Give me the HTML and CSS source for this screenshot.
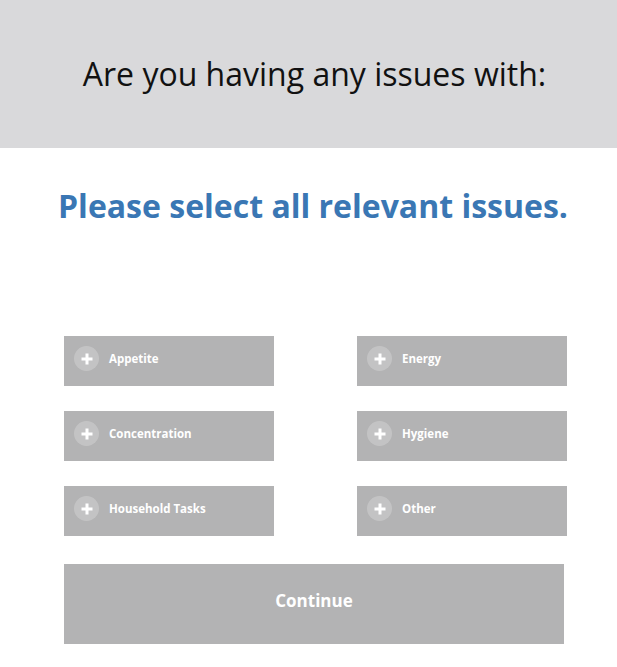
FILE: index.html
```html
<!DOCTYPE html>
<html>
<head>
<meta charset="utf-8">
<link rel="stylesheet" href="styles.css">
</head>
<body>
<header class="top">
  <h1 class="question">Are you having any issues with:</h1>
</header>
<h2 class="prompt">Please select all relevant issues.</h2>
<main class="content">
  <div class="options">
    <button class="opt"><span class="plus"></span><span class="label">Appetite</span></button>
    <button class="opt"><span class="plus"></span><span class="label">Energy</span></button>
    <button class="opt"><span class="plus"></span><span class="label">Concentration</span></button>
    <button class="opt"><span class="plus"></span><span class="label">Hygiene</span></button>
    <button class="opt"><span class="plus"></span><span class="label">Household Tasks</span></button>
    <button class="opt"><span class="plus"></span><span class="label">Other</span></button>
  </div>
  <button class="continue">Continue</button>
</main>
</body>
</html>
```
FILE: styles.css
```css
* { box-sizing: border-box; }
html, body { margin: 0; padding: 0; background: #fff; }
body { font-family: "Open Sans", "DejaVu Sans", sans-serif; width: 617px; }
.top {
  height: 148px;
  background: #d9d9db;
  display: flex;
  align-items: center;
  justify-content: center;
}
.question {
  margin: 0;
  font-weight: 400;
  font-size: 32px;
  color: #111;
  padding-left: 12px;
  padding-bottom: 2px;
}
.prompt {
  margin: 36px 0 0;
  text-align: center;
  font-size: 32px;
  font-weight: 700;
  color: #3a77b4;
  line-height: 44px;
  padding-left: 9px;
}
.content {
  padding: 108px 0 0 64px;
}
.options {
  display: grid;
  grid-template-columns: 210px 210px;
  column-gap: 83px;
  row-gap: 25px;
}
.opt {
  height: 50px;
  border: 0;
  margin: 0;
  background: #b3b3b4;
  display: flex;
  align-items: center;
  padding: 0 0 5px 10px;
  font-family: inherit;
  cursor: pointer;
}
.plus {
  width: 25px;
  height: 25px;
  border-radius: 50%;
  background: rgba(255,255,255,0.22);
  position: relative;
  flex: none;
}
.plus::before, .plus::after {
  content: "";
  position: absolute;
  background: #fff;
  left: 50%;
  top: 50%;
  transform: translate(-50%, -50%);
}
.plus::before { width: 11px; height: 3px; }
.plus::after { width: 3px; height: 11px; }
.label {
  margin-left: 10px;
  color: #fff;
  font-size: 11.5px;
  font-weight: 700;
}
.continue {
  display: block;
  margin-top: 28px;
  width: 500px;
  height: 80px;
  border: 0;
  padding: 0 0 8px;
  background: #b3b3b4;
  color: #fff;
  font-family: inherit;
  font-size: 17px;
  font-weight: 700;
  cursor: pointer;
}
```
